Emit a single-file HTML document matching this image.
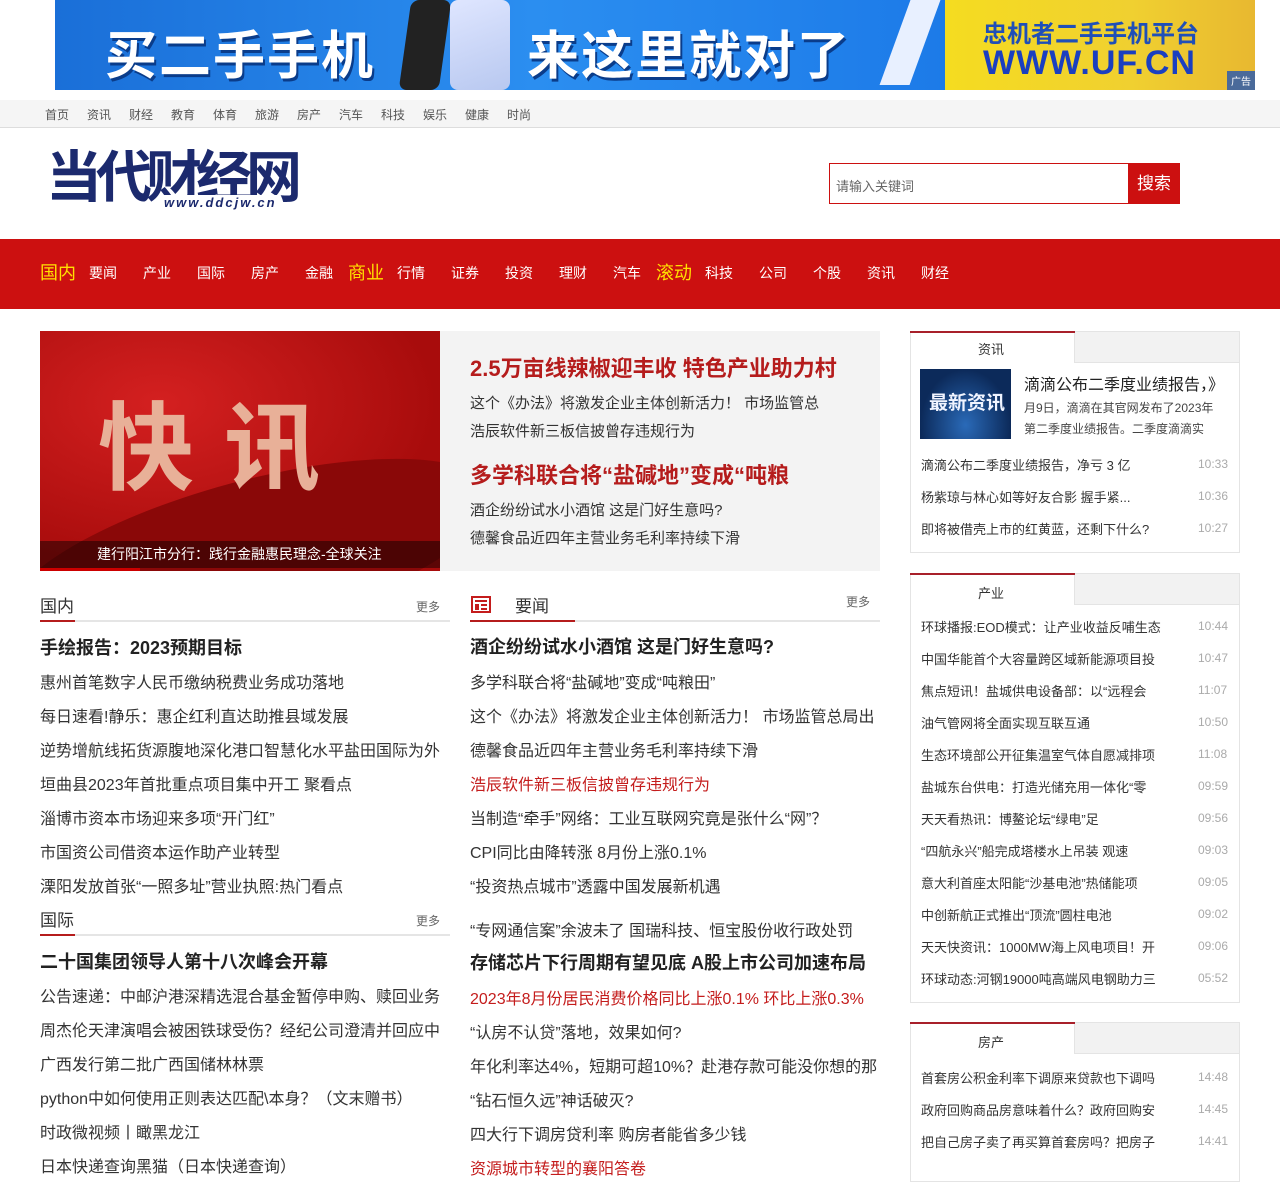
<!DOCTYPE html>
<html><head><meta charset="utf-8">
<style>
*{margin:0;padding:0;box-sizing:border-box}
body{width:1280px;height:1167px;overflow:hidden;background:#fff;font-family:"Liberation Sans","Noto Sans CJK SC",sans-serif;color:#333;position:relative}
.a{position:absolute;white-space:nowrap}
.banner{left:55px;top:0;width:1200px;height:90px;background:linear-gradient(90deg,#1a6fd8,#2b8ef0 40%,#1c7ae8 75%);overflow:hidden}
.banner .y{position:absolute;left:890px;top:0;width:310px;height:90px;background:linear-gradient(90deg,#f5dc20,#f0d030 60%,#e8b830)}
.banner .t{position:absolute;top:14px;font-size:52px;font-weight:bold;color:#fff;letter-spacing:2px;text-shadow:2px 3px 0 #0a3c8a}
.topnav{left:0;top:100px;width:1280px;height:28px;background:#f5f5f5;border-bottom:1px solid #ddd}
.topnav span{position:absolute;top:6px;font-size:12px;color:#555}
.rednav{left:0;top:239px;width:1280px;height:70px;background:#cc1010}
.rednav span{position:absolute;top:24px;font-size:14px;color:#fff}
.rednav b{position:absolute;top:20px;font-size:18px;font-weight:normal;color:#ffe000}
.li{font-size:16px;color:#333;margin-top:-3px}
.hd{font-size:18px;font-weight:bold;color:#222;margin-top:-3px}
.sec{font-size:17px;color:#333;margin-top:-4px}
.more{font-size:12px;color:#666}
.box{border:1px solid #e4e4e4}
.s{font-size:13px;color:#333;margin-top:-2px}
.tm{font-size:12px;color:#aaa}
</style></head><body>
<div class="a banner">
 <div class="t" style="left:50px">买二手手机</div>
 <div style="position:absolute;left:350px;top:0;width:40px;height:90px;background:#222;border-radius:8px;transform:skewX(-8deg)"></div>
 <div style="position:absolute;left:395px;top:0;width:60px;height:90px;background:linear-gradient(160deg,#dfe6ff,#b8c8f0);border-radius:8px"></div>
 <div class="t" style="left:472px">来这里就对了</div>
 <div style="position:absolute;left:840px;top:0;width:30px;height:85px;background:#e8f0ff;transform:skewX(-20deg)"></div>
 <div class="y"></div>
 <div style="position:absolute;left:928px;top:14px;font-size:24px;font-weight:bold;color:#1f4fb8">忠机者二手手机平台</div>
 <div style="position:absolute;left:928px;top:44px;font-size:34px;font-weight:bold;color:#1a3fc0;letter-spacing:1px">WWW.UF.CN</div>
 <div style="position:absolute;right:0;bottom:0;background:#4a6a9a;color:#fff;font-size:10px;padding:2px 4px">广告</div>
</div>
<div class="a topnav">
 <span style="left:45px">首页</span><span style="left:87px">资讯</span><span style="left:129px">财经</span><span style="left:171px">教育</span><span style="left:213px">体育</span><span style="left:255px">旅游</span><span style="left:297px">房产</span><span style="left:339px">汽车</span><span style="left:381px">科技</span><span style="left:423px">娱乐</span><span style="left:465px">健康</span><span style="left:507px">时尚</span>
</div>
<div class="a" style="left:46px;top:146px;font-size:56px;font-weight:bold;color:#1c2a6e;letter-spacing:-6px;line-height:64px">当代<span style="color:#1c2a6e">财</span>经网</div>
<div class="a" style="left:162px;top:195px;font-size:13px;color:#1c2a6e;font-style:italic;letter-spacing:2px;font-weight:bold;background:#fff;padding:0 2px">www.ddcjw.cn</div>
<div class="a" style="left:829px;top:163px;width:300px;height:41px;border:1px solid #cc1010;font-size:13px;color:#666;padding:12px 6px">请输入关键词</div>
<div class="a" style="left:1128px;top:163px;width:52px;height:41px;background:#cc1010;color:#fff;font-size:17px;text-align:center;line-height:41px">搜索</div>
<div class="a rednav">
 <b style="left:40px">国内</b><span style="left:89px">要闻</span><span style="left:143px">产业</span><span style="left:197px">国际</span><span style="left:251px">房产</span><span style="left:305px">金融</span><b style="left:348px">商业</b><span style="left:397px">行情</span><span style="left:451px">证券</span><span style="left:505px">投资</span><span style="left:559px">理财</span><span style="left:613px">汽车</span><b style="left:656px">滚动</b><span style="left:705px">科技</span><span style="left:759px">公司</span><span style="left:813px">个股</span><span style="left:867px">资讯</span><span style="left:921px">财经</span>
</div>
<!-- slide -->
<div class="a" style="left:40px;top:331px;width:400px;height:240px;background:radial-gradient(ellipse at 30% 30%,#d42020,#a80c0c 70%);overflow:hidden">
 <div style="position:absolute;left:-40px;top:150px;width:500px;height:150px;border-radius:50%;background:#8a0808;transform:rotate(-15deg)"></div>
 <div style="position:absolute;left:58px;top:40px;font-size:96px;font-weight:bold;color:#e8b098;letter-spacing:30px">快讯</div>
 <div style="position:absolute;left:0;top:210px;width:400px;height:27px;background:rgba(0,0,0,.45);color:#fff;font-size:14px;padding:3px 0 0 57px">建行阳江市分行：践行金融惠民理念-全球关注</div>
 <div style="position:absolute;left:0;top:237px;width:100px;height:3px;background:#c00"></div>
</div>
<div class="a" style="left:440px;top:331px;width:440px;height:240px;background:#f3f3f3"></div>
<div class="a" style="left:470px;top:351px;font-size:22px;font-weight:bold;color:#b51c1c">2.5万亩线辣椒迎丰收 特色产业助力村</div>
<div class="a" style="left:470px;top:392px;font-size:15px;color:#333">这个《办法》将激发企业主体创新活力！ 市场监管总</div>
<div class="a" style="left:470px;top:420px;font-size:15px;color:#333">浩辰软件新三板信披曾存违规行为</div>
<div class="a" style="left:470px;top:458px;font-size:22px;font-weight:bold;color:#b51c1c">多学科联合将“盐碱地”变成“吨粮</div>
<div class="a" style="left:470px;top:499px;font-size:15px;color:#333">酒企纷纷试水小酒馆 这是门好生意吗?</div>
<div class="a" style="left:470px;top:527px;font-size:15px;color:#333">德馨食品近四年主营业务毛利率持续下滑</div>
<!-- left col -->
<div class="a sec" style="left:40px;top:596px">国内</div>
<div class="a more" style="left:416px;top:598px">更多</div>
<div class="a" style="left:40px;top:620px;width:410px;height:2px;background:#e5e5e5"></div>
<div class="a" style="left:40px;top:620px;width:35px;height:2px;background:#b51c1c"></div>
<div class="a hd" style="left:40px;top:637px">手绘报告：2023预期目标</div>
<div class="a li" style="left:40px;top:672px">惠州首笔数字人民币缴纳税费业务成功落地</div>
<div class="a li" style="left:40px;top:706px">每日速看!静乐：惠企红利直达助推县域发展</div>
<div class="a li" style="left:40px;top:740px">逆势增航线拓货源腹地深化港口智慧化水平盐田国际为外</div>
<div class="a li" style="left:40px;top:774px">垣曲县2023年首批重点项目集中开工 聚看点</div>
<div class="a li" style="left:40px;top:808px">淄博市资本市场迎来多项“开门红”</div>
<div class="a li" style="left:40px;top:842px">市国资公司借资本运作助产业转型</div>
<div class="a li" style="left:40px;top:876px">溧阳发放首张“一照多址”营业执照:热门看点</div>
<div class="a sec" style="left:40px;top:910px">国际</div>
<div class="a more" style="left:416px;top:912px">更多</div>
<div class="a" style="left:40px;top:934px;width:410px;height:2px;background:#e5e5e5"></div>
<div class="a" style="left:40px;top:934px;width:35px;height:2px;background:#b51c1c"></div>
<div class="a hd" style="left:40px;top:951px">二十国集团领导人第十八次峰会开幕</div>
<div class="a li" style="left:40px;top:986px">公告速递：中邮沪港深精选混合基金暂停申购、赎回业务</div>
<div class="a li" style="left:40px;top:1020px">周杰伦天津演唱会被困铁球受伤？经纪公司澄清并回应中</div>
<div class="a li" style="left:40px;top:1054px">广西发行第二批广西国储林林票</div>
<div class="a li" style="left:40px;top:1088px">python中如何使用正则表达匹配\本身？（文末赠书）</div>
<div class="a li" style="left:40px;top:1122px">时政微视频丨瞰黑龙江</div>
<div class="a li" style="left:40px;top:1156px">日本快递查询黑猫（日本快递查询）</div>
<!-- middle col -->
<div class="a" style="left:471px;top:596px;width:20px;height:17px;border:2px solid #c41c1c;background:#fff">
 <div style="position:absolute;left:2px;top:2px;width:12px;height:2px;background:#c41c1c"></div>
 <div style="position:absolute;left:2px;top:6px;width:4px;height:6px;background:#c41c1c"></div>
 <div style="position:absolute;left:8px;top:6px;width:6px;height:2px;background:#c41c1c"></div>
 <div style="position:absolute;left:8px;top:10px;width:6px;height:2px;background:#c41c1c"></div>
</div>
<div class="a sec" style="left:515px;top:596px">要闻</div>
<div class="a more" style="left:846px;top:593px">更多</div>
<div class="a" style="left:470px;top:620px;width:410px;height:2px;background:#e5e5e5"></div>
<div class="a" style="left:470px;top:620px;width:105px;height:2px;background:#b51c1c"></div>
<div class="a hd" style="left:470px;top:636px">酒企纷纷试水小酒馆 这是门好生意吗?</div>
<div class="a li" style="left:470px;top:672px">多学科联合将“盐碱地”变成“吨粮田”</div>
<div class="a li" style="left:470px;top:706px">这个《办法》将激发企业主体创新活力！ 市场监管总局出</div>
<div class="a li" style="left:470px;top:740px">德馨食品近四年主营业务毛利率持续下滑</div>
<div class="a li" style="left:470px;top:774px;color:#c41c1c">浩辰软件新三板信披曾存违规行为</div>
<div class="a li" style="left:470px;top:808px">当制造“牵手”网络：工业互联网究竟是张什么“网”？</div>
<div class="a li" style="left:470px;top:842px">CPI同比由降转涨 8月份上涨0.1%</div>
<div class="a li" style="left:470px;top:876px">“投资热点城市”透露中国发展新机遇</div>
<div class="a li" style="left:470px;top:920px">“专网通信案”余波未了 国瑞科技、恒宝股份收行政处罚</div>
<div class="a hd" style="left:470px;top:952px">存储芯片下行周期有望见底 A股上市公司加速布局</div>
<div class="a li" style="left:470px;top:988px;color:#c41c1c">2023年8月份居民消费价格同比上涨0.1% 环比上涨0.3%</div>
<div class="a li" style="left:470px;top:1022px">“认房不认贷”落地，效果如何?</div>
<div class="a li" style="left:470px;top:1056px">年化利率达4%，短期可超10%？赴港存款可能没你想的那</div>
<div class="a li" style="left:470px;top:1090px">“钻石恒久远”神话破灭?</div>
<div class="a li" style="left:470px;top:1124px">四大行下调房贷利率 购房者能省多少钱</div>
<div class="a li" style="left:470px;top:1158px;color:#c41c1c">资源城市转型的襄阳答卷</div>
<!-- sidebar box1 -->
<div class="a box" style="left:910px;top:331px;width:330px;height:222px"></div>
<div class="a" style="left:1074px;top:332px;width:165px;height:31px;background:#f2f2f2;border-left:1px solid #e4e4e4;border-bottom:1px solid #e4e4e4"></div>
<div class="a" style="left:910px;top:331px;width:165px;height:2px;background:#a8202a"></div>
<div class="a s" style="left:978px;top:341px">资讯</div>
<div class="a" style="left:920px;top:369px;width:91px;height:70px;background:radial-gradient(ellipse at 50% 80%,#2a6ab8,#0c2a5a 70%)"><div style="position:absolute;left:9px;top:19px;font-size:19px;font-weight:bold;color:#f0f4ff">最新资讯</div></div>
<div class="a" style="left:1024px;top:371px;font-size:16px;color:#222">滴滴公布二季度业绩报告，》</div>
<div class="a" style="left:1024px;top:399px;font-size:12px;color:#444">月9日，滴滴在其官网发布了2023年</div>
<div class="a" style="left:1024px;top:420px;font-size:12px;color:#444">第二季度业绩报告。二季度滴滴实</div>
<div class="a s" style="left:921px;top:457px">滴滴公布二季度业绩报告，净亏 3 亿</div><div class="a tm" style="left:1198px;top:457px">10:33</div>
<div class="a s" style="left:921px;top:489px">杨紫琼与林心如等好友合影 握手紧...</div><div class="a tm" style="left:1198px;top:489px">10:36</div>
<div class="a s" style="left:921px;top:521px">即将被借壳上市的红黄蓝，还剩下什么?</div><div class="a tm" style="left:1198px;top:521px">10:27</div>
<!-- box2 -->
<div class="a box" style="left:910px;top:573px;width:330px;height:430px"></div>
<div class="a" style="left:1074px;top:574px;width:165px;height:31px;background:#f2f2f2;border-left:1px solid #e4e4e4;border-bottom:1px solid #e4e4e4"></div>
<div class="a" style="left:910px;top:573px;width:165px;height:2px;background:#a8202a"></div>
<div class="a s" style="left:978px;top:585px">产业</div>
<div class="a s" style="left:921px;top:619px">环球播报:EOD模式：让产业收益反哺生态</div><div class="a tm" style="left:1198px;top:619px">10:44</div>
<div class="a s" style="left:921px;top:651px">中国华能首个大容量跨区域新能源项目投</div><div class="a tm" style="left:1198px;top:651px">10:47</div>
<div class="a s" style="left:921px;top:683px">焦点短讯！盐城供电设备部：以“远程会</div><div class="a tm" style="left:1198px;top:683px">11:07</div>
<div class="a s" style="left:921px;top:715px">油气管网将全面实现互联互通</div><div class="a tm" style="left:1198px;top:715px">10:50</div>
<div class="a s" style="left:921px;top:747px">生态环境部公开征集温室气体自愿减排项</div><div class="a tm" style="left:1198px;top:747px">11:08</div>
<div class="a s" style="left:921px;top:779px">盐城东台供电：打造光储充用一体化“零</div><div class="a tm" style="left:1198px;top:779px">09:59</div>
<div class="a s" style="left:921px;top:811px">天天看热讯：博鳌论坛“绿电”足</div><div class="a tm" style="left:1198px;top:811px">09:56</div>
<div class="a s" style="left:921px;top:843px">“四航永兴”船完成塔楼水上吊装 观速</div><div class="a tm" style="left:1198px;top:843px">09:03</div>
<div class="a s" style="left:921px;top:875px">意大利首座太阳能“沙基电池”热储能项</div><div class="a tm" style="left:1198px;top:875px">09:05</div>
<div class="a s" style="left:921px;top:907px">中创新航正式推出“顶流”圆柱电池</div><div class="a tm" style="left:1198px;top:907px">09:02</div>
<div class="a s" style="left:921px;top:939px">天天快资讯：1000MW海上风电项目！开</div><div class="a tm" style="left:1198px;top:939px">09:06</div>
<div class="a s" style="left:921px;top:971px">环球动态:河钢19000吨高端风电钢助力三</div><div class="a tm" style="left:1198px;top:971px">05:52</div>
<!-- box3 -->
<div class="a box" style="left:910px;top:1022px;width:330px;height:160px"></div>
<div class="a" style="left:1074px;top:1023px;width:165px;height:31px;background:#f2f2f2;border-left:1px solid #e4e4e4;border-bottom:1px solid #e4e4e4"></div>
<div class="a" style="left:910px;top:1022px;width:165px;height:2px;background:#a8202a"></div>
<div class="a s" style="left:978px;top:1034px">房产</div>
<div class="a s" style="left:921px;top:1070px">首套房公积金利率下调原来贷款也下调吗</div><div class="a tm" style="left:1198px;top:1070px">14:48</div>
<div class="a s" style="left:921px;top:1102px">政府回购商品房意味着什么？政府回购安</div><div class="a tm" style="left:1198px;top:1102px">14:45</div>
<div class="a s" style="left:921px;top:1134px">把自己房子卖了再买算首套房吗？把房子</div><div class="a tm" style="left:1198px;top:1134px">14:41</div>
</body></html>
